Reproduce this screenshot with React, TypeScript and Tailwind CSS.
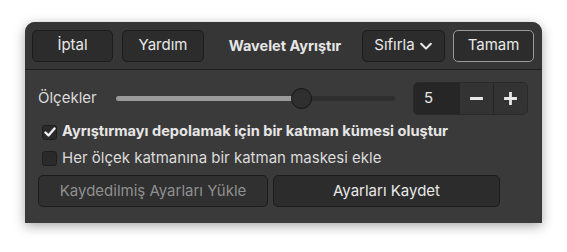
import React from "react";

function Btn({ children, className = "" }: { children: React.ReactNode; className?: string }) {
  return (
    <div
      className={
        "flex items-center justify-center h-[32px] rounded-[5px] bg-[#2c2c2c] border border-[#1c1c1c] text-[15px] text-[#e8e8e8] " +
        className
      }
    >
      {children}
    </div>
  );
}

export default function App() {
  return (
    <div
      className="w-[567px] h-[252px] bg-white pl-[25px] pt-[22px]"
      style={{ fontFamily: "Inter, 'Noto Sans', sans-serif" }}
    >
      <div className="w-[517px] h-[201px] rounded-t-[10px] bg-[#3a3a3a] shadow-[0_3px_12px_rgba(0,0,0,0.35)] flex flex-col overflow-hidden">
        {/* header */}
        <div className="h-[48px] bg-[#363636] border-b border-[#1f1f1f] flex items-center pl-[7px] pr-[8px] shrink-0">
          <Btn className="w-[81px]">İptal</Btn>
          <Btn className="w-[82px] ml-[9px]">Yardım</Btn>
          <div className="flex-1 text-center font-bold text-[14.5px] text-[#e6e6e6] pl-[4px]">Wavelet Ayrıştır</div>
          <Btn className="w-[83px] gap-[4px]">
            Sıfırla
            <svg width="14" height="14" viewBox="0 0 16 16" fill="none">
              <path d="M2.5 5.5 L8 11 L13.5 5.5" stroke="#e8e8e8" strokeWidth="2.4" strokeLinecap="round" strokeLinejoin="round" />
            </svg>
          </Btn>
          <Btn className="w-[81px] ml-[8px] !border-[#9a9a9a]">Tamam</Btn>
        </div>
        {/* body */}
        <div className="flex flex-col px-[13px] pt-[12px]">
          <div className="flex items-center h-[33px]">
            <div className="text-[15px] text-[#dcdcdc] w-[78px]">Ölçekler</div>
            <div className="relative w-[279px] h-[20px] flex items-center">
              <div className="absolute left-0 right-0 h-[5px] rounded-full bg-[#2e2e2e]" />
              <div className="absolute left-0 w-[185px] h-[5px] rounded-full bg-[#9a9a9a]" />
              <div className="absolute left-[175px] w-[21px] h-[21px] rounded-full bg-[#2f2f2f] border border-[#141414]" />
            </div>
            <div className="ml-[18px] flex h-[33px] w-[115px] rounded-[5px] border border-[#2a2a2a] overflow-hidden">
              <div className="w-[45px] bg-[#262626] flex items-center pl-[10px] text-[15px] text-[#e8e8e8]">5</div>
              <div className="flex-1 flex items-center justify-center bg-[#333333] border-l border-[#262626]">
                <svg width="15" height="15" viewBox="0 0 14 14">
                  <path d="M1 7 H13" stroke="#e8e8e8" strokeWidth="2.6" />
                </svg>
              </div>
              <div className="flex-1 flex items-center justify-center bg-[#333333] border-l border-[#262626]">
                <svg width="15" height="15" viewBox="0 0 14 14">
                  <path d="M1 7 H13 M7 1 V13" stroke="#e8e8e8" strokeWidth="2.6" />
                </svg>
              </div>
            </div>
          </div>
          <div className="flex items-center mt-[7px] h-[20px] pl-[4px]">
            <div className="w-[15px] h-[15px] rounded-[3px] bg-[#2a2a2a] border border-[#1e1e1e] flex items-center justify-center">
              <svg width="12" height="12" viewBox="0 0 12 12" fill="none">
                <path d="M1.5 6.5 L4.5 9.5 L10.5 2.5" stroke="#f0f0f0" strokeWidth="2.4" strokeLinecap="round" strokeLinejoin="round" />
              </svg>
            </div>
            <div className="ml-[5px] text-[14.6px] font-bold text-[#e6e6e6]">Ayrıştırmayı depolamak için bir katman kümesi oluştur</div>
          </div>
          <div className="flex items-center mt-[6px] h-[20px] pl-[4px]">
            <div className="w-[15px] h-[15px] rounded-[3px] bg-[#2a2a2a] border border-[#1e1e1e]" />
            <div className="ml-[5px] text-[15px] text-[#dcdcdc]">Her ölçek katmanına bir katman maskesi ekle</div>
          </div>
          <div className="flex mt-[7px]">
            <Btn className="w-[230px] !text-[#8f8f8f] !bg-[#303030]">Kaydedilmiş Ayarları Yükle</Btn>
            <Btn className="w-[227px] ml-[5px]">Ayarları Kaydet</Btn>
          </div>
        </div>
      </div>
    </div>
  );
}
